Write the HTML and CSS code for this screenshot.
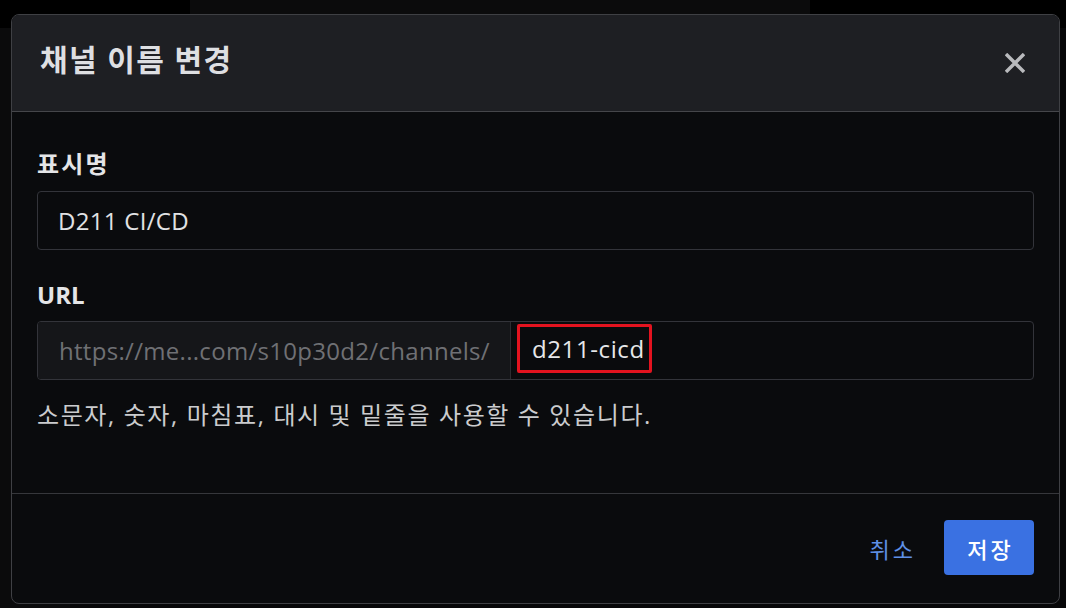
FILE: index.html
```html
<!DOCTYPE html>
<html lang="ko">
<head>
<meta charset="utf-8">
<title>채널 이름 변경</title>
<link rel="stylesheet" href="styles.css">
</head>
<body>
<div class="app">
  <div class="topbar">
    <div class="top-left"></div>
    <div class="search"></div>
    <div class="top-right"></div>
  </div>
  <div class="app-main">
    <div class="sidebar"></div>
    <div class="center"></div>
  </div>
</div>

<div class="modal" role="dialog">
  <div class="modal-header">
    <h1 class="modal-title">채널 이름 변경</h1>
    <button class="close" aria-label="닫기">
      <svg width="20" height="20" viewBox="0 0 20 20"><path d="M1 1 L19 19 M19 1 L1 19" stroke="#b9babd" stroke-width="3.4" stroke-linecap="butt" fill="none"/></svg>
    </button>
  </div>
  <div class="modal-body">
    <label class="field-label ko">표시명</label>
    <div class="input name-input">D211 CI/CD</div>
    <label class="field-label url-label">URL</label>
    <div class="input url-input">
      <div class="url-prefix">https://me...com/s10p30d2/channels/</div>
      <div class="url-slug"><span class="highlight">d211-cicd</span></div>
    </div>
    <p class="help">소문자, 숫자, 마침표, 대시 및 밑줄을 사용할 수 있습니다.</p>
  </div>
  <div class="modal-footer">
    <button class="btn-cancel">취소</button>
    <button class="btn-save">저장</button>
  </div>
</div>
</body>
</html>
```
FILE: styles.css
```css
* { box-sizing: border-box; }

html, body {
  margin: 0;
  height: 100%;
  background: #040405;
  font-family: "Open Sans", "Noto Sans CJK KR", sans-serif;
  overflow: hidden;
}

.app {
  height: 608px;
  display: flex;
  flex-direction: column;
}

.topbar {
  height: 28px;
  display: flex;
  background: #000;
}
.top-left { width: 190px; }
.search { width: 620px; background: #0b0b0c; }
.top-right { flex: 1; }

.app-main {
  flex: 1;
  display: flex;
}
.sidebar { width: 70px; background: #0b0b0c; }
.center { flex: 1; background: #070708; }

.modal {
  position: absolute;
  left: 11px;
  top: 14px;
  width: 1049px;
  height: 590px;
  border: 1px solid #3f4044;
  border-radius: 8px;
  background: #0a0b0d;
  display: flex;
  flex-direction: column;
  overflow: hidden;
}

.modal-header {
  height: 97px;
  background: #1e1f23;
  border-bottom: 1px solid #45464a;
  display: flex;
  align-items: center;
  justify-content: space-between;
  padding: 0 25px 0 28px;
}

.modal-title {
  margin: 0;
  font-size: 30px;
  font-weight: 700;
  color: #dedfe2;
  line-height: 40px;
  padding-bottom: 6px;
  letter-spacing: 1.4px;
}

.close {
  background: none;
  border: 0;
  padding: 0;
  width: 24px;
  height: 24px;
  display: flex;
  align-items: center;
  justify-content: center;
  margin-right: 7px;
  margin-bottom: 1px;
}

.modal-body {
  height: 382px;
  padding: 36px 25px 0 25px;
  display: flex;
  flex-direction: column;
  border-bottom: 1px solid #36373b;
}

.field-label {
  font-size: 24px;
  font-weight: 700;
  line-height: 32px;
  color: #e4e5e7;
  height: 32px;
}

.field-label.ko { letter-spacing: 2.2px; }

.url-label { margin-top: 29px; }

.input {
  margin-top: 11px;
  height: 59px;
  border: 1px solid #33343a;
  border-radius: 4px;
  padding: 0 20px;
  display: flex;
  align-items: center;
  font-size: 24px;
  color: #e1e2e4;
  background: #0a0b0d;
}

.name-input { letter-spacing: 0.3px; }

.url-input {
  margin-top: 10px;
  padding: 0;
  overflow: hidden;
}

.url-prefix {
  height: 100%;
  width: 473px;
  background: #151619;
  border-right: 1px solid #2c2d31;
  color: #6f7074;
  display: flex;
  align-items: center;
  padding-left: 21px;
  white-space: nowrap;
  letter-spacing: 0.3px;
}

.url-slug {
  flex: 1;
  height: 100%;
  display: flex;
  align-items: center;
  padding-left: 6px;
}

.highlight {
  display: flex;
  align-items: center;
  height: 49px;
  margin-bottom: 4px;
  border: 3px solid #e3131f;
  border-radius: 2px;
  padding: 0 4px 0 12px;
  color: #e6e7e9;
  letter-spacing: 0.6px;
}

.help {
  margin: 19px 0 0 0;
  font-size: 24px;
  line-height: 32px;
  color: #cbccce;
  letter-spacing: 1.6px;
}

.modal-footer {
  flex: 1;
  display: flex;
  justify-content: flex-end;
  align-items: center;
  padding: 0 25px 2px 25px;
}

.btn-cancel {
  background: none;
  border: 0;
  font-family: inherit;
  font-size: 22px;
  letter-spacing: 3px;
  color: #5f90e6;
  padding: 0 28px 0 0;
  height: 55px;
}

.btn-save {
  font-family: inherit;
  background: #3a71e2;
  border: 0;
  border-radius: 4px;
  color: #ffffff;
  font-size: 22px;
  font-weight: 500;
  letter-spacing: 3px;
  text-indent: 3px;
  width: 90px;
  height: 55px;
  padding: 0;
}
```
